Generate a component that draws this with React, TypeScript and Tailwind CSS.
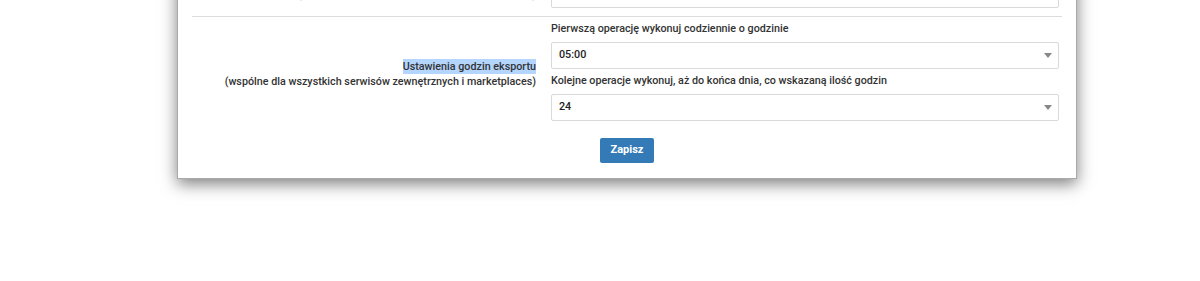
import * as React from 'react';

const font = { fontFamily: 'Roboto, "Liberation Sans", sans-serif' };

const Select: React.FC<{ value: string }> = ({ value }) => (
	<div className="flex h-[27px] w-[508px] items-center justify-between rounded-[2px] border border-[#d9d9d9] bg-white pr-[6px] pl-[7px]">
		<span className="text-[10.75px] font-medium text-[#222]">{value}</span>
		<svg width="8" height="5" viewBox="0 0 8 5" className="text-[#888]">
			<path d="M0 0h8L4 5z" fill="currentColor" />
		</svg>
	</div>
);

const App: React.FC = () => {
	return (
		<div className="h-[281px] w-[1200px] overflow-hidden bg-white" style={font}>
			<div className="-mt-[23px] ml-[177px] w-[900px] border border-[#a9a9a9] bg-white px-[14px] pb-[15px] shadow-[0_5px_15px_rgba(0,0,0,0.5)]">
				{/* previous row, cut off by the top of the window */}
				<div className="flex h-[38px] items-end pb-[8px]">
					<div className="w-[359px] pr-[15px] text-right text-[10.75px] font-medium leading-[14px] text-[#333]">
						<div className="translate-y-[-6px]">(wspólne dla wszystkich serwisów zewnętrznych)</div>
					</div>
					<div className="h-[27px] w-[508px] rounded-[2px] border border-[#d9d9d9]" />
				</div>

				<div className="border-t border-[#dcdcdc]">
					<div className="flex">
						<div className="flex w-[359px] items-center justify-end pt-[11px] pr-[15px] text-right text-[10.75px] font-medium leading-[14px] text-[#333]">
							<div>
								<div>
									<span className="bg-[#b4d5fe] py-[1px]">Ustawienia godzin eksportu</span>
								</div>
								<div className="mt-[1px]">(wspólne dla wszystkich serwisów zewnętrznych i marketplaces)</div>
							</div>
						</div>
						<div className="pt-[4px]">
							<div className="text-[10.75px] font-medium leading-[15px] text-[#333]">
								Pierwszą operację wykonuj codziennie o godzinie
							</div>
							<div className="mt-[6px]">
								<Select value="05:00" />
							</div>
							<div className="mt-[4px] text-[10.75px] font-medium leading-[15px] text-[#333]">
								Kolejne operacje wykonuj, aż do końca dnia, co wskazaną ilość godzin
							</div>
							<div className="mt-[6px]">
								<Select value="24" />
							</div>
						</div>
					</div>
					<div className="flex">
						<div className="w-[359px]" />
						<button className="mt-[17px] ml-[49px] h-[25px] w-[54px] rounded-[2px] bg-[#337ab7] text-[11px] font-bold text-white">
							Zapisz
						</button>
					</div>
				</div>
			</div>
		</div>
	);
};

export default App;
